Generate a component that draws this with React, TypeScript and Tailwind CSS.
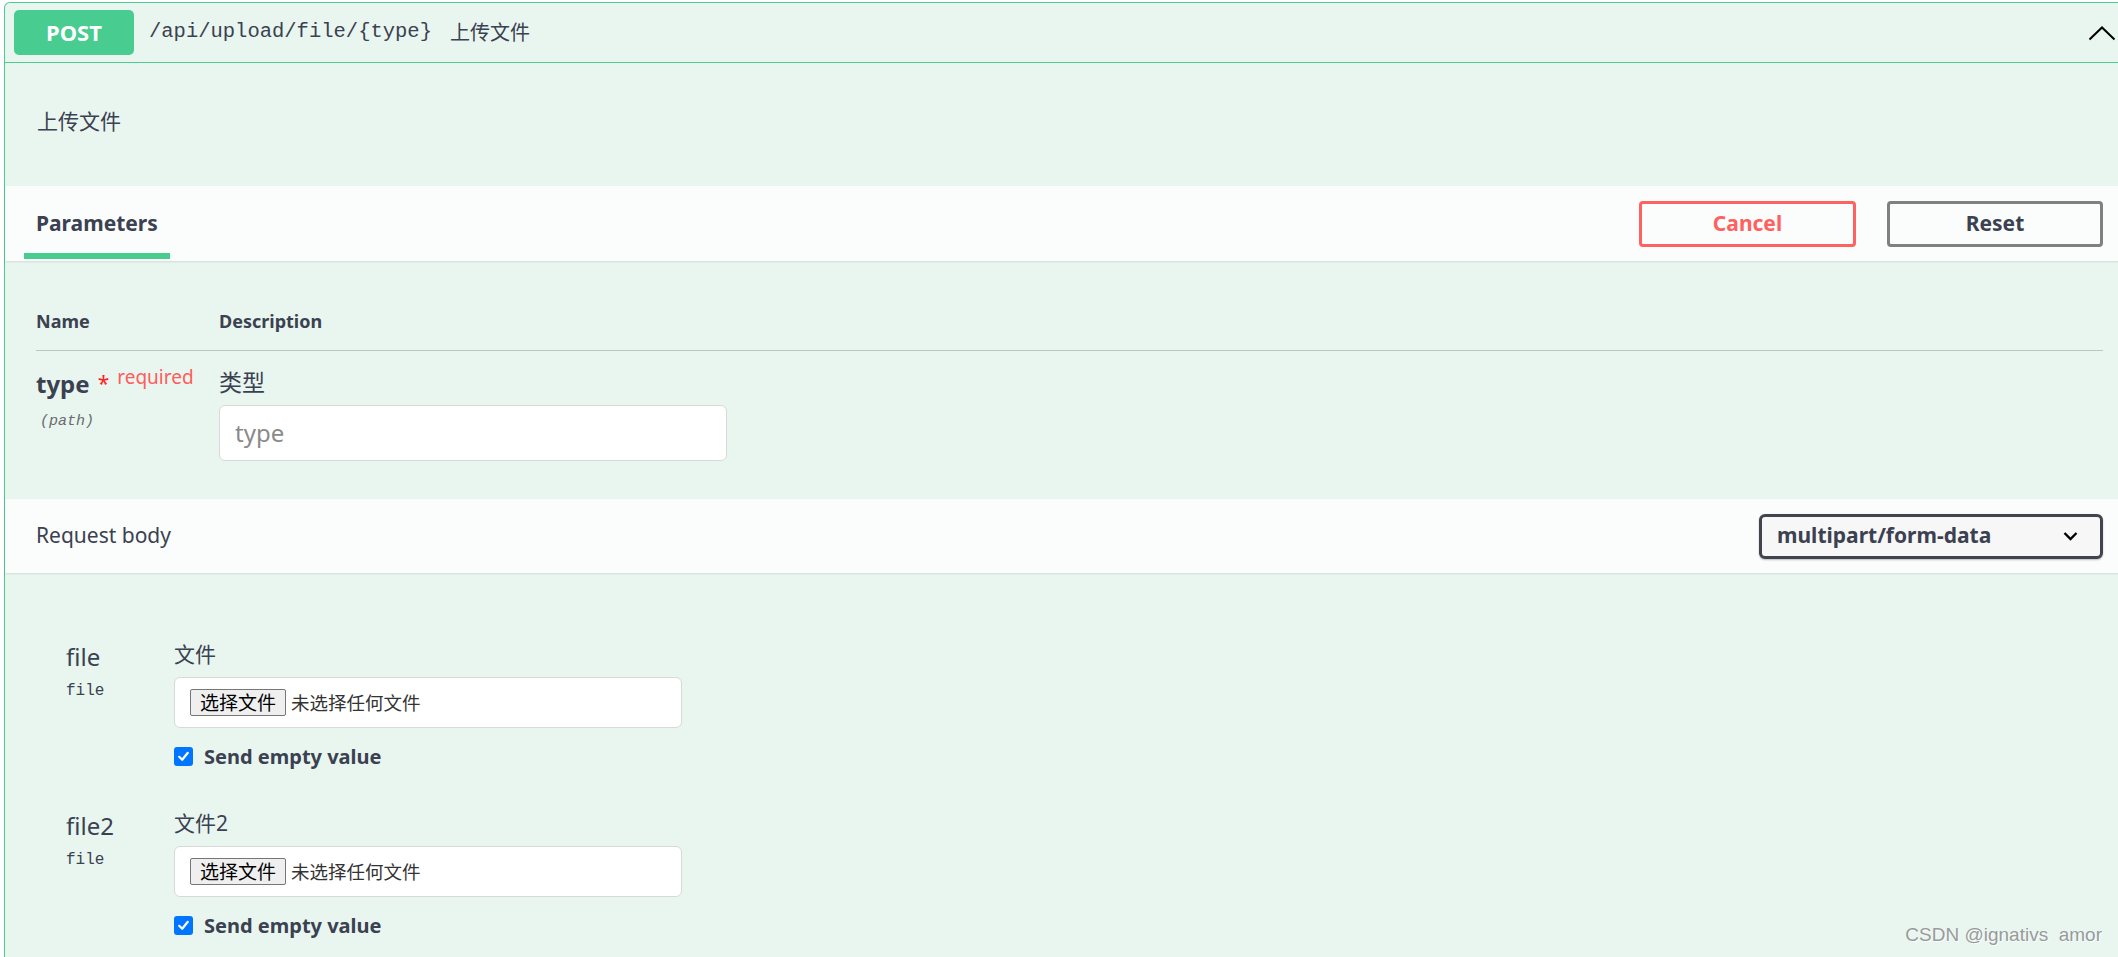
import React from "react";

const Check = () => (
  <span className="flex h-[19px] w-[19px] shrink-0 items-center justify-center rounded-[3px] bg-[#0075ff]">
    <svg width="13" height="13" viewBox="0 0 13 13" fill="none">
      <path d="M2.2 6.8 L5.2 9.8 L10.8 2.8" stroke="white" strokeWidth="2.2" strokeLinecap="round" strokeLinejoin="round" />
    </svg>
  </span>
);

const FileParam = ({ name, label }: { name: string; label: string }) => (
  <div className="flex items-start">
    <div className="w-[108px] shrink-0">
      <div className="text-[24px] leading-[34px] text-[#3b4151]">{name}</div>
      <div className="mt-[7px] font-['Liberation_Mono',monospace] text-[16px] leading-[20px] text-[#3b4151]">file</div>
    </div>
    <div className="flex flex-col">
      <div className="text-[21px] leading-[29px] text-[#3b4151]">{label}</div>
      <div className="mt-[8px] flex h-[51px] w-[508px] items-center rounded-[6px] border border-[#d9d9d9] bg-white pl-[15px]">
        <span className="flex h-[27px] items-center rounded-[2px] border border-[#767676] bg-[#efefef] px-[9px] text-[19px] leading-[20px] text-black">
          选择文件
        </span>
        <span className="ml-[5px] text-[18.5px] text-[#333]">未选择任何文件</span>
      </div>
      <div className="mt-[14px] flex items-center gap-[11px]">
        <Check />
        <span className="text-[20px] font-bold leading-[29px] text-[#3b4151]">Send empty value</span>
      </div>
    </div>
  </div>
);

export default function App() {
  return (
    <div className="relative h-[957px] w-[2118px] overflow-hidden bg-white pt-[2px] font-['Noto_Sans','Noto_Sans_CJK_SC',sans-serif] text-[#3b4151]">
      <div className="ml-[4px] flex h-[955px] w-[2117px] flex-col rounded-tl-[6px] border-l border-r border-t border-[#49cc90] bg-[#e8f6ef]">
        {/* summary */}
        <div className="flex h-[60px] shrink-0 items-center border-b border-[#49cc90] pr-[4px]">
          <div className="ml-[9px] flex h-[45px] w-[120px] items-center justify-center rounded-[5px] bg-[#49cc90] text-[22px] font-bold text-white">
            POST
          </div>
          <span className="ml-[15px] font-['Liberation_Mono',monospace] text-[20.5px] text-[#3b4151]">
            /api/upload/file/{"{type}"}
          </span>
          <span className="ml-[18px] text-[20px] text-[#3b4151]">上传文件</span>
          <svg className="ml-auto" width="28" height="16" viewBox="0 0 28 16" fill="none">
            <polyline points="1.5,14.5 14,2.5 26.5,14.5" stroke="#000" strokeWidth="2" />
          </svg>
        </div>

        {/* description */}
        <div className="flex h-[123px] shrink-0 items-center pb-[5px] pl-[32px] text-[21px]">上传文件</div>

        {/* parameters header */}
        <div className="flex h-[75px] shrink-0 items-stretch justify-between bg-[#fafdfb] shadow-[0_1px_2px_rgba(0,0,0,0.1)]">
          <div className="mb-[2px] ml-[19px] flex items-center border-b-[6px] border-[#49cc90] px-[12px] pt-[8px] text-[21px] font-bold">
            Parameters
          </div>
          <div className="flex items-center gap-[31px] pr-[17px]">
            <button className="h-[46px] w-[217px] rounded-[4px] border-[3px] border-[#ff6060] bg-transparent text-[21px] font-bold text-[#ff6060]">
              Cancel
            </button>
            <button className="h-[46px] w-[216px] rounded-[4px] border-[3px] border-[#808080] bg-transparent text-[21px] font-bold text-[#3b4151]">
              Reset
            </button>
          </div>
        </div>

        {/* parameters table */}
        <div className="shrink-0 pb-[38px] pl-[31px] pr-[17px]">
          <div className="flex border-b border-[#bcc6c1] pb-[16px] pt-[48px] text-[18px] font-bold leading-[25px]">
            <div className="w-[183px]">Name</div>
            <div>Description</div>
          </div>
          <div className="flex pt-[16px]">
            <div className="w-[183px] shrink-0">
              <div className="flex items-start">
                <span className="text-[24px] font-bold leading-[34px]">type</span>
                <span className="ml-[8px] mt-[4px] text-[21px] leading-[24px] text-[#ff2020]">*</span>
                <span className="-mt-[3px] ml-[8px] text-[19px] leading-[26px] text-[#ff5c5c]">required</span>
              </div>
              <div className="ml-[4px] mt-[11px] font-['Liberation_Mono',monospace] text-[15px] italic leading-[20px] text-[#6b6b6b]">
                (path)
              </div>
            </div>
            <div className="flex flex-col">
              <div className="text-[23px] leading-[31px]">类型</div>
              <div className="mt-[7px] flex h-[56px] w-[508px] items-center rounded-[6px] border border-[#d9d9d9] bg-white pl-[15px] text-[24px] text-[#8a8a8a]">
                type
              </div>
            </div>
          </div>
        </div>

        {/* request body header */}
        <div className="flex h-[74px] shrink-0 items-center justify-between bg-[#fafdfb] pl-[31px] pr-[17px] shadow-[0_1px_2px_rgba(0,0,0,0.1)]">
          <span className="text-[21px]">Request body</span>
          <div className="flex h-[45px] w-[344px] items-center justify-between rounded-[6px] border-[3px] border-[#41444e] bg-[#f7f7f7] pl-[15px] pr-[22px] shadow-[0_1px_2px_rgba(0,0,0,0.25)]">
            <span className="text-[21px] font-bold">multipart/form-data</span>
            <svg width="15" height="10" viewBox="0 0 15 10" fill="none">
              <polyline points="1.5,2 7.5,8 13.5,2" stroke="#000" strokeWidth="2.4" />
            </svg>
          </div>
        </div>

        {/* body params */}
        <div className="flex flex-1 flex-col gap-[38px] pl-[61px] pt-[67px]">
          <FileParam name="file" label="文件" />
          <FileParam name="file2" label="文件2" />
        </div>
      </div>

      <div className="absolute bottom-[8px] right-[16px] font-['Liberation_Sans',sans-serif] text-[19px] text-[#9a9a9a] [text-shadow:1px_1px_1px_rgba(255,255,255,0.9)]">
        CSDN @ignativs&nbsp;&nbsp;amor
      </div>
    </div>
  );
}
